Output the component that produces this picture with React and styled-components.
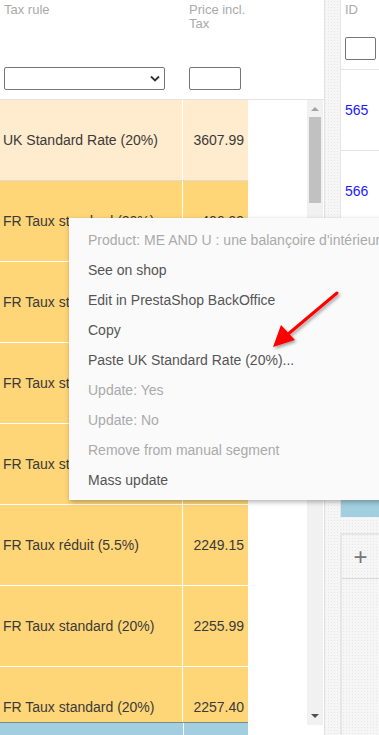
import React from "react";
import styled, { createGlobalStyle } from "styled-components";

const GlobalStyle = createGlobalStyle`
  html, body {
    margin: 0;
    padding: 0;
    width: 379px;
    height: 735px;
    overflow: hidden;
    font-family: "Liberation Sans", Arial, sans-serif;
  }
`;

const Page = styled.div`
  position: relative;
  display: flex;
  width: 379px;
  height: 735px;
  overflow: hidden;
  background-color: #f6f6f6;
  background-image: radial-gradient(#e6e6e6 0.6px, transparent 0.6px);
  background-size: 3px 3px;
`;

const LeftPanel = styled.div`
  flex: 0 0 324px;
  display: flex;
  flex-direction: column;
  background: #fff;
  border-right: 1px solid #e2e2e2;
`;

const Header = styled.div`
  display: flex;
  height: 100px;
  border-bottom: 1px solid #e4e4e4;
  box-sizing: border-box;
`;

const HeadCell = styled.div`
  width: ${(p) => p.$w}px;
  padding: 3px 0 0 ${(p) => p.$pl}px;
  box-sizing: border-box;
  display: flex;
  flex-direction: column;
`;

const HeadLabel = styled.div`
  font-size: 13px;
  line-height: 14px;
  height: 64px;
  color: #aaa;
`;

const FilterSelect = styled.div`
  width: ${(p) => p.$w}px;
  height: 23px;
  box-sizing: border-box;
  border: 1px solid #767676;
  border-radius: 2px;
  background: #fff;
  display: flex;
  align-items: center;
  justify-content: flex-end;
  padding-right: 4px;
`;

const Body = styled.div`
  flex: 1;
  display: flex;
  min-height: 0;
`;

const Table = styled.div`
  width: 307px;
  display: flex;
  flex-direction: column;
  overflow: hidden;
`;

const Rows = styled.div`
  height: 622px;
  overflow: hidden;
  flex: 0 0 622px;
`;

const Row = styled.div`
  display: flex;
  width: 248px;
  height: 81px;
  box-sizing: border-box;
  border-bottom: 1px solid ${(p) => (p.$selected ? "#e2dcd0" : "#fff")};
  background: ${(p) => (p.$selected ? "#ffebcd" : "#ffd677")};
  color: #3a3a3a;
  font-size: 14px;
`;

const TaxCell = styled.div`
  width: 183px;
  border-right: 1px solid #fff;
  display: flex;
  align-items: center;
  padding-left: 3px;
  box-sizing: border-box;
`;

const PriceCell = styled.div`
  flex: 1;
  display: flex;
  align-items: center;
  justify-content: flex-end;
  padding-right: 4px;
`;

const FooterRow = styled.div`
  display: flex;
  width: 248px;
  height: 12px;
  background: #a1cfdf;
  border-top: 1px solid #7a8a90;
`;

const FooterSplit = styled.div`
  width: 183px;
  border-right: 1px solid #fff;
`;

const Scrollbar = styled.div`
  width: 16px;
  height: 625px;
  background: #f1f1f1;
  display: flex;
  flex-direction: column;
  align-items: center;
`;

const ArrowBox = styled.div`
  height: 17px;
  width: 16px;
  display: flex;
  align-items: center;
  justify-content: center;
  margin-top: ${(p) => (p.$down ? "auto" : "0")};
`;

const Thumb = styled.div`
  width: 12px;
  height: 86px;
  background: #c1c1c1;
`;

const Gutter = styled.div`
  flex: 0 0 15px;
`;

const RightColumn = styled.div`
  flex: 1;
  display: flex;
  flex-direction: column;
  gap: 16px;
`;

const IdPanel = styled.div`
  height: 517px;
  background: #fff;
  border-left: 1px solid #e4e4e4;
  display: flex;
  flex-direction: column;
`;

const IdHeader = styled.div`
  height: 70px;
  border-bottom: 1px solid #e4e4e4;
  padding: 3px 0 0 4px;
  box-sizing: border-box;
  font-size: 13px;
  line-height: 14px;
  color: #aaa;
`;

const IdInput = styled.div`
  margin-top: 20px;
  width: 31px;
  height: 23px;
  box-sizing: border-box;
  border: 1px solid #767676;
  border-radius: 2px;
`;

const IdRow = styled.div`
  height: 81px;
  box-sizing: border-box;
  border-bottom: 1px solid #e4e4e4;
  display: flex;
  align-items: center;
  padding-left: 4px;
  font-size: 14px;
  color: #1a1aff;
`;

const BlueStrip = styled.div`
  margin-top: auto;
  height: 36px;
  background: #a1cfdf;
`;

const AddPanel = styled.div`
  flex: 1;
  border: 2px solid #e6e6e6;
  border-right: none;
  border-bottom: none;
  display: flex;
  flex-direction: column;
`;

const AddButton = styled.div`
  height: 43px;
  border-bottom: 1px solid #d8d8d8;
  display: flex;
  align-items: center;
  justify-content: center;
  color: #777;
  font-size: 24px;
  font-weight: 300;
`;

const Menu = styled.div`
  position: absolute;
  left: 69px;
  top: 218px;
  width: 330px;
  height: 282px;
  box-sizing: border-box;
  padding: 7px 0;
  background: #fafafa;
  box-shadow: 1px 2px 5px rgba(0, 0, 0, 0.3);
`;

const MenuItem = styled.div`
  height: 30px;
  line-height: 30px;
  padding-left: 19px;
  font-size: 14px;
  white-space: nowrap;
  color: ${(p) => (p.$disabled ? "#aaa" : "#555")};
`;

const ArrowOverlay = styled.svg`
  position: absolute;
  left: 260px;
  top: 285px;
  overflow: visible;
`;

const rows = [
  ["UK Standard Rate (20%)", "3607.99", true],
  ["FR Taux standard (20%)", "406.99"],
  ["FR Taux standard (20%)", "2199.00"],
  ["FR Taux standard (20%)", "2210.50"],
  ["FR Taux standard (20%)", "2240.00"],
  ["FR Taux réduit (5.5%)", "2249.15"],
  ["FR Taux standard (20%)", "2255.99"],
  ["FR Taux standard (20%)", "2257.40"],
];

const menuItems = [
  ["Product: ME AND U : une balançoire d'intérieur", true],
  ["See on shop"],
  ["Edit in PrestaShop BackOffice"],
  ["Copy"],
  ["Paste UK Standard Rate (20%)..."],
  ["Update: Yes", true],
  ["Update: No", true],
  ["Remove from manual segment", true],
  ["Mass update"],
];

export default function App() {
  return (
    <>
      <GlobalStyle />
      <Page>
        <LeftPanel>
          <Header>
            <HeadCell $w={184} $pl={4}>
              <HeadLabel>Tax rule</HeadLabel>
              <FilterSelect $w={161}>
                <svg width="10" height="7" viewBox="0 0 10 7">
                  <path d="M1 1.5 L5 5.5 L9 1.5" fill="none" stroke="#333" strokeWidth="1.8" />
                </svg>
              </FilterSelect>
            </HeadCell>
            <HeadCell $w={70} $pl={5}>
              <HeadLabel>
                Price incl.
                <br />
                Tax
              </HeadLabel>
              <FilterSelect $w={52} />
            </HeadCell>
          </Header>
          <Body>
            <Table>
              <Rows>
                {rows.map(([tax, price, sel], i) => (
                  <Row key={i} $selected={sel}>
                    <TaxCell>{tax}</TaxCell>
                    <PriceCell>{price}</PriceCell>
                  </Row>
                ))}
              </Rows>
              <FooterRow>
                <FooterSplit />
              </FooterRow>
            </Table>
            <Scrollbar>
              <ArrowBox>
                <svg width="8" height="5" viewBox="0 0 8 5">
                  <path d="M0 5 L4 1 L8 5 Z" fill="#a3a3a3" />
                </svg>
              </ArrowBox>
              <Thumb />
              <ArrowBox $down>
                <svg width="8" height="5" viewBox="0 0 8 5">
                  <path d="M0 0 L4 4 L8 0 Z" fill="#505050" />
                </svg>
              </ArrowBox>
            </Scrollbar>
          </Body>
        </LeftPanel>
        <Gutter />
        <RightColumn>
          <IdPanel>
            <IdHeader>
              ID
              <IdInput />
            </IdHeader>
            <IdRow>565</IdRow>
            <IdRow>566</IdRow>
            <IdRow>567</IdRow>
            <BlueStrip />
          </IdPanel>
          <AddPanel>
            <AddButton>+</AddButton>
          </AddPanel>
        </RightColumn>

        <Menu>
          {menuItems.map(([label, disabled], i) => (
            <MenuItem key={i} $disabled={disabled}>
              {label}
            </MenuItem>
          ))}
        </Menu>

        <ArrowOverlay width="90" height="70" viewBox="0 0 90 70">
          <defs>
            <filter id="sh" x="-20%" y="-20%" width="150%" height="150%">
              <feDropShadow dx="1.5" dy="2" stdDeviation="1.5" floodColor="#000" floodOpacity="0.35" />
            </filter>
          </defs>
          <g filter="url(#sh)">
            <line x1="77" y1="8" x2="27" y2="50" stroke="#f00" strokeWidth="3" strokeLinecap="round" />
            <polygon points="13,62 21,40 35,55" fill="#f00" />
          </g>
        </ArrowOverlay>
      </Page>
    </>
  );
}
